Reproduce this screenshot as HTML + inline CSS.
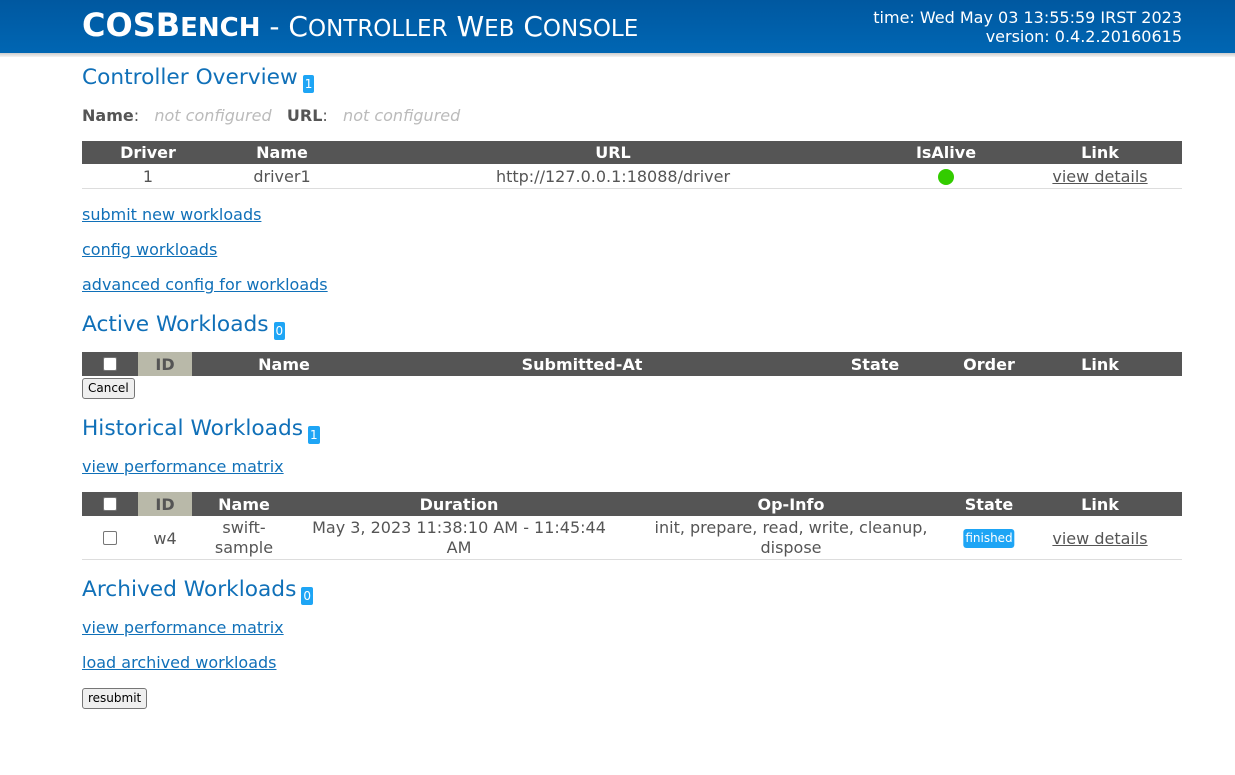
<!DOCTYPE html>
<html><head><meta charset="utf-8"><style>
*{margin:0;padding:0;box-sizing:border-box}
body{width:1235px;height:775px;position:relative;background:#fff;font-family:"DejaVu Sans","Liberation Sans",sans-serif;color:#555;font-size:16px;overflow:hidden}
.a{position:absolute;white-space:nowrap}
.hdr{position:absolute;left:0;top:0;width:1235px;height:53px;background:linear-gradient(#0058a0,#0066b3)}
.sh{position:absolute;left:0;top:53px;width:1235px;height:4px;background:linear-gradient(#ccc,#f4f4f4)}
.h{color:#1070b8;font-size:21.7px}
.b{display:inline-block;background:#1ea5f5;color:#fff;font-size:12px;border-radius:2px;padding:0 2px;vertical-align:-4px;line-height:18px;margin-left:5px}
a{color:#1070b8;text-decoration:underline}
.th{position:absolute;left:82px;width:1100px;height:24px;background:#555}
.c{position:absolute;transform:translateX(-50%);white-space:nowrap;text-align:center}
.w{color:#fff;font-weight:bold;font-size:16px}
.line{position:absolute;left:82px;width:1100px;height:1px;background:#ddd}
.cb{position:absolute;width:14px;height:14px;background:#fff;border:1px solid #767676;border-radius:2px}
.btn{position:absolute;background:#efefef;border:1px solid #767676;border-radius:3px;font-size:12px;color:#000;padding:0 5px;height:21px;line-height:19px}
</style></head><body>
<div class="hdr"></div><div class="sh"></div>
<div class="a" style="left:82px;top:6px;color:#fff;font-size:28px;font-variant:small-caps"><b style="font-size:32px">COSB<span style="font-size:26px">ENCH</span></b> - C<span style="font-size:23px">ONTROLLER</span> W<span style="font-size:23px">EB</span> C<span style="font-size:23px">ONSOLE</span></div>
<div class="a" style="right:53px;top:8px;color:#fff;font-size:16px;text-align:right;line-height:19px">time: Wed May 03 13:55:59 IRST 2023<br>version: 0.4.2.20160615</div>

<div class="a h" style="left:82px;top:65px">Controller Overview<span class="b">1</span></div>
<div class="a" style="left:82px;top:106px"><b>Name</b>: &nbsp; <i style="color:#bbb">not configured</i> &nbsp; <b>URL</b>: &nbsp; <i style="color:#bbb">not configured</i></div>

<div class="th" style="top:141px;height:23px"></div>
<div class="c w" style="left:148px;top:143px">Driver</div>
<div class="c w" style="left:282px;top:143px">Name</div>
<div class="c w" style="left:613px;top:143px">URL</div>
<div class="c w" style="left:946px;top:143px">IsAlive</div>
<div class="c w" style="left:1100px;top:143px">Link</div>
<div class="c" style="left:148px;top:167px">1</div>
<div class="c" style="left:282px;top:167px">driver1</div>
<div class="c" style="left:613px;top:167px">http://127.0.0.1:18088/driver</div>
<div class="a" style="left:938px;top:169px;width:16px;height:16px;border-radius:50%;background:#33cc00"></div>
<div class="c" style="left:1100px;top:167px;text-decoration:underline">view details</div>
<div class="line" style="top:188px"></div>

<a class="a" style="left:82px;top:205px">submit new workloads</a>
<a class="a" style="left:82px;top:240px">config workloads</a>
<a class="a" style="left:82px;top:275px">advanced config for workloads</a>

<div class="a h" style="left:82px;top:312px">Active Workloads<span class="b">0</span></div>
<div class="th" style="top:352px"></div>
<div class="a" style="left:138px;top:352px;width:54px;height:24px;background:#b9b9a9"></div>
<div class="cb" style="left:103px;top:357px"></div>
<div class="c w" style="left:165px;top:355px;color:#555">ID</div>
<div class="c w" style="left:284px;top:355px">Name</div>
<div class="c w" style="left:582px;top:355px">Submitted-At</div>
<div class="c w" style="left:875px;top:355px">State</div>
<div class="c w" style="left:989px;top:355px">Order</div>
<div class="c w" style="left:1100px;top:355px">Link</div>
<div class="btn" style="left:82px;top:378px">Cancel</div>

<div class="a h" style="left:82px;top:416px">Historical Workloads<span class="b">1</span></div>
<a class="a" style="left:82px;top:457px">view performance matrix</a>

<div class="th" style="top:492px"></div>
<div class="a" style="left:138px;top:492px;width:54px;height:24px;background:#b9b9a9"></div>
<div class="cb" style="left:103px;top:497px"></div>
<div class="c w" style="left:165px;top:495px;color:#555">ID</div>
<div class="c w" style="left:244px;top:495px">Name</div>
<div class="c w" style="left:459px;top:495px">Duration</div>
<div class="c w" style="left:791px;top:495px">Op-Info</div>
<div class="c w" style="left:989px;top:495px">State</div>
<div class="c w" style="left:1100px;top:495px">Link</div>
<div class="cb" style="left:103px;top:531px"></div>
<div class="c" style="left:165px;top:529px">w4</div>
<div class="c" style="left:244px;top:518px;line-height:20px">swift-<br>sample</div>
<div class="c" style="left:459px;top:518px;line-height:20px">May 3, 2023 11:38:10 AM - 11:45:44<br>AM</div>
<div class="c" style="left:791px;top:518px;line-height:20px">init, prepare, read, write, cleanup,<br>dispose</div>
<div class="c" style="left:989px;top:529px;background:#1ea5f5;color:#fff;font-size:12px;border-radius:3px;padding:0 2px;line-height:19px">finished</div>
<div class="c" style="left:1100px;top:529px;text-decoration:underline">view details</div>
<div class="line" style="top:559px"></div>

<div class="a h" style="left:82px;top:577px">Archived Workloads<span class="b">0</span></div>
<a class="a" style="left:82px;top:618px">view performance matrix</a>
<a class="a" style="left:82px;top:653px">load archived workloads</a>
<div class="btn" style="left:82px;top:688px">resubmit</div>
</body></html>
